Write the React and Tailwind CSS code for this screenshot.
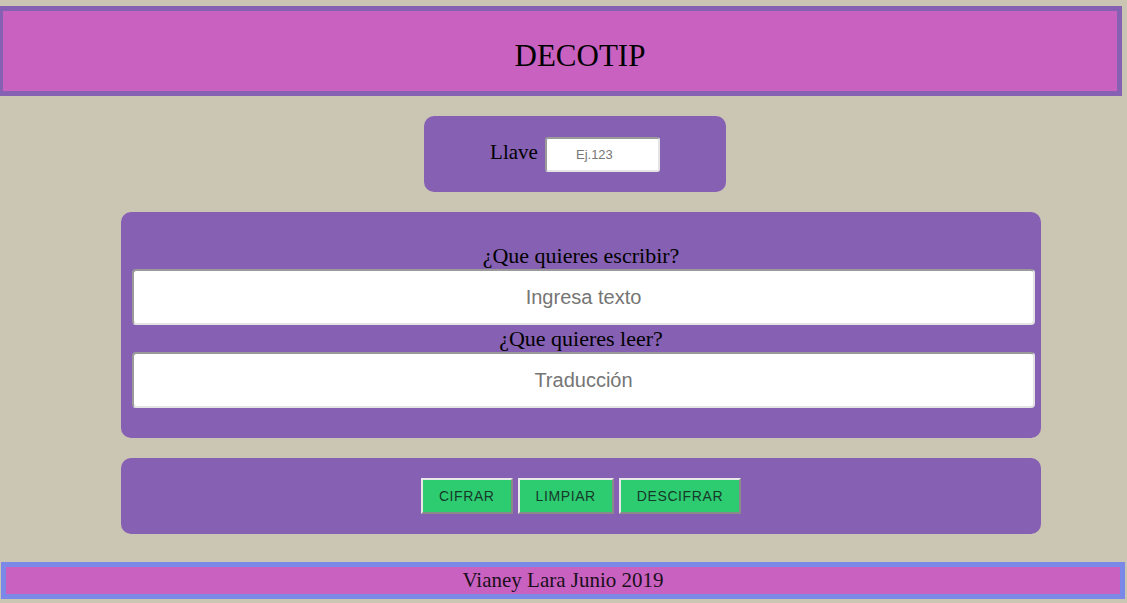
import React from "react";

const serif = { fontFamily: '"Liberation Serif", "DejaVu Serif", serif' };

export default function App() {
  return (
    <div
      className="min-h-[603px] w-[1127px] overflow-hidden bg-[#cbc6b4] pt-[6px] pb-[4px] text-black"
      style={serif}
    >
      {/* Header */}
      <header className="h-[90px] w-[1122px] border-[5px] border-l-[3px] border-[#8560b3] bg-[#c961c0] flex items-center justify-center pl-[40px]">
        <h1 className="text-[31px] leading-none pt-[9px]">DECOTIP</h1>
      </header>

      {/* Llave */}
      <div className="mt-[20px] ml-[424px] w-[302px] h-[76px] rounded-[10px] bg-[#8560b3] flex items-center justify-center gap-[7px]">
        <span className="text-[21px] leading-none pb-[4px]">Llave</span>
        <input
          type="text"
          placeholder="Ej.123"
          className="h-[35px] w-[115px] rounded-[3px] border-2 border-t-[#9a9a9a] border-l-[#9a9a9a] border-b-[#e4e4e4] border-r-[#e4e4e4] bg-white pr-[16px] text-center text-[13px] placeholder:text-[#777] outline-none"
          style={{ fontFamily: '"Liberation Sans", Arial, sans-serif' }}
        />
      </div>

      {/* Texts */}
      <div className="mt-[20px] ml-[121px] w-[920px] rounded-[10px] bg-[#8560b3] pt-[30px] pb-[30px] pl-[11px] pr-[6px]">
        <div className="h-[27px] text-center text-[22px] leading-[27px] pr-[5px]">¿Que quieres escribir?</div>
        <input
          type="text"
          placeholder="Ingresa texto"
          className="block h-[56px] w-[903px] rounded-[4px] border-2 border-t-[#9a9a9a] border-l-[#9a9a9a] border-b-[#e4e4e4] border-r-[#e4e4e4] bg-white text-center text-[20px] placeholder:text-[#757575] outline-none"
          style={{ fontFamily: '"Liberation Sans", Arial, sans-serif' }}
        />
        <div className="h-[27px] text-center text-[22px] leading-[27px] pr-[5px]">¿Que quieres leer?</div>
        <input
          type="text"
          placeholder="Traducción"
          className="block h-[56px] w-[903px] rounded-[4px] border-2 border-t-[#9a9a9a] border-l-[#9a9a9a] border-b-[#e4e4e4] border-r-[#e4e4e4] bg-white text-center text-[20px] placeholder:text-[#757575] outline-none"
          style={{ fontFamily: '"Liberation Sans", Arial, sans-serif' }}
        />
      </div>

      {/* Buttons */}
      <div
        className="mt-[20px] ml-[121px] w-[920px] h-[76px] rounded-[10px] bg-[#8560b3] flex items-center justify-center gap-[5px]"
        style={{ fontFamily: '"Liberation Sans", Arial, sans-serif' }}
      >
        {["CIFRAR", "LIMPIAR", "DESCIFRAR"].map((b) => (
          <button
            key={b}
            className="h-[36px] px-[16px] border-2 border-t-[#e8e8e8] border-l-[#e8e8e8] border-b-[#8a8a8a] border-r-[#8a8a8a] bg-[#2ecc71] text-[14px] tracking-[0.6px] text-[#153a2a]"
          >
            {b}
          </button>
        ))}
      </div>

      {/* Footer */}
      <footer className="mt-[28px] ml-[1px] w-[1124px] h-[37px] border-[5px] border-[#7c88e8] bg-[#c961c0] flex items-center justify-center">
        <span className="text-[21px] leading-none text-[#1a0f1a]">Vianey Lara Junio 2019</span>
      </footer>
    </div>
  );
}
